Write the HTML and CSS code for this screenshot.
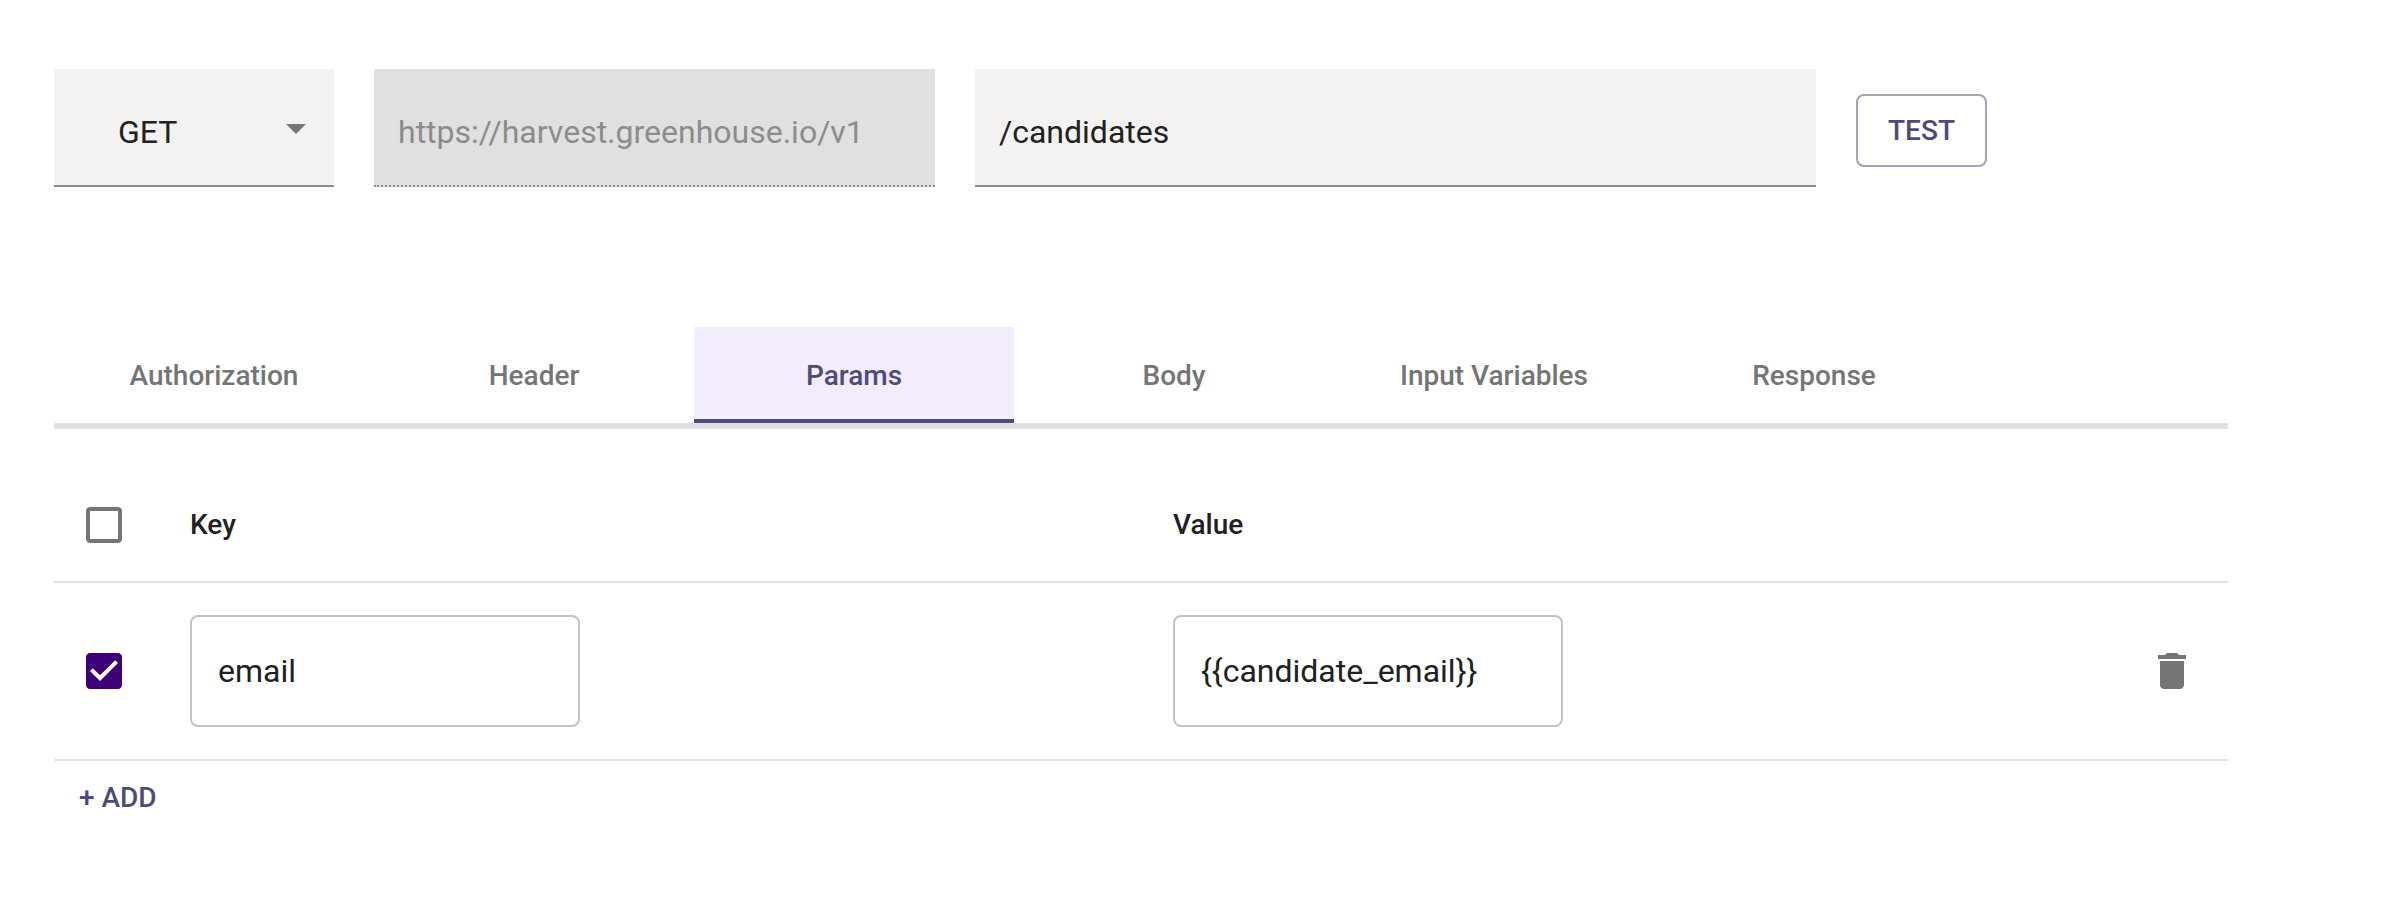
FILE: index.html
```html
<!DOCTYPE html>
<html lang="en">
<head>
<meta charset="utf-8">
<title>Request editor</title>
<link rel="stylesheet" href="styles.css">
</head>
<body>
<main class="editor">
  <div class="request">
    <div class="field field-method"><span>GET</span>
      <svg class="icon" viewBox="0 0 24 24"><path d="M7 10l5 5 5-5z"/></svg>
    </div>
    <div class="field field-base">https://harvest.greenhouse.io/v1</div>
    <div class="field field-path">/candidates</div>
    <button class="test">TEST</button>
  </div>
  <nav class="tabs">
    <div class="tab">Authorization</div>
    <div class="tab">Header</div>
    <div class="tab tab-active">Params</div>
    <div class="tab">Body</div>
    <div class="tab">Input Variables</div>
    <div class="tab">Response</div>
  </nav>
  <section class="table">
    <div class="row row-head">
      <div class="check"><svg class="icon" viewBox="0 0 24 24"><path d="M19 5v14H5V5h14m0-2H5c-1.1 0-2 .9-2 2v14c0 1.1.9 2 2 2h14c1.1 0 2-.9 2-2V5c0-1.1-.9-2-2-2z"/></svg></div>
      <div class="key">Key</div>
      <div class="value">Value</div>
    </div>
    <div class="row row-param">
      <div class="check check-on"><svg class="icon" viewBox="0 0 24 24"><path d="M19 3H5c-1.11 0-2 .9-2 2v14c0 1.1.89 2 2 2h14c1.11 0 2-.9 2-2V5c0-1.1-.89-2-2-2zm-9 14l-5-5 1.41-1.41L10 14.17l7.59-7.59L19 8l-9 9z"/></svg></div>
      <div class="key"><div class="input">email</div></div>
      <div class="value"><div class="input">{{candidate_email}}</div></div>
      <svg class="icon" viewBox="0 0 24 24"><path d="M6 19c0 1.1.9 2 2 2h8c1.1 0 2-.9 2-2V7H6v12zM19 4h-3.5l-1-1h-5l-1 1H5v2h14V4z"/></svg>
    </div>
  </section>
  <button class="add">+ ADD</button>
</main>
</body>
</html>
```
FILE: styles.css
```css
* { box-sizing: border-box; }
body {
  margin: 0;
  background: #fff;
  color: #212121;
  font-family: Roboto, "Liberation Sans", sans-serif;
  font-size: 32px;
}
.editor { width: 2228px; padding: 69px 0 0 54px; }
.icon { width: 48px; height: 48px; fill: #757575; flex: none; display: block; }
button { font: inherit; background: none; border: 0; padding: 0; color: #4e4b7c; }
.request { display: flex; align-items: flex-start; gap: 40px; }
.field {
  height: 118px;
  padding: 44px 24px 0;
  line-height: 38px;
  background: #f3f2f0;
  border-bottom: 2px solid #8c8c8c;
}
.field-method { width: 280px; display: flex; justify-content: space-between; padding: 44px 14px 0 64px; }
.field-method .icon { margin-top: -9px; }
.field-base { width: 561px; background: #e0e0e0; color: #8c8c8c; border-bottom-style: dotted; }
.field-path { width: 841px; }
.test {
  width: 131px;
  height: 73px;
  margin-top: 25px;
  border: 2px solid #a5a3bc;
  border-radius: 8px;
  font-size: 28px;
  font-weight: 500;
  line-height: 49px;
}
.tabs { display: flex; margin-top: 140px; border-bottom: 6px solid #e0e0e0; }
.tab {
  width: 320px;
  height: 96px;
  line-height: 98px;
  text-align: center;
  font-size: 28px;
  font-weight: 500;
  color: #757575;
}
.tab-active { background: #f3ecfd; color: #4e4b7c; box-shadow: inset 0 -4px #4e4b7c; }
.row { display: flex; align-items: center; border-bottom: 2px solid #e0e0e0; }
.row-head { height: 154px; padding-top: 40px; font-size: 28px; font-weight: 500; }
.row-head .key, .row-head .value { padding-bottom: 2px; }
.row-param { height: 178px; padding-right: 32px; }
.check { width: 136px; padding-left: 26px; flex: none; }
.check-on .icon { fill: #3e0078; }
.key { width: 983px; }
.value { flex: 1; }
.input {
  width: 390px;
  height: 112px;
  padding: 0 26px;
  line-height: 108px;
  border: 2px solid #c2c2c2;
  border-radius: 8px;
}
.add { display: block; margin: 12px 0 0 25px; font-size: 28px; font-weight: 500; line-height: 49px; }
```
